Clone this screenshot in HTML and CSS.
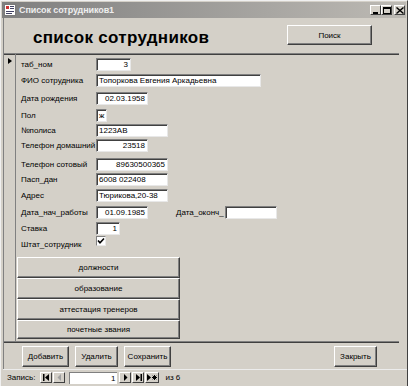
FILE: index.html
```html
<!DOCTYPE html>
<html lang="ru">
<head>
<meta charset="utf-8">
<title>Список сотрудников1</title>
<link rel="stylesheet" href="styles.css">
</head>
<body>
<div class="window">
  <div class="titlebar">
    <svg class="appicon" width="12" height="12" viewBox="0 0 12 12">
      <rect x="0.5" y="0.5" width="11" height="11" fill="#fff" stroke="#7a7a7a"/>
      <rect x="2" y="2" width="3" height="3" fill="#c33"/>
      <rect x="6" y="2" width="4" height="1" fill="#446"/>
      <rect x="6" y="4" width="4" height="1" fill="#446"/>
      <rect x="2" y="7" width="8" height="1" fill="#446"/>
      <rect x="2" y="9" width="6" height="1" fill="#446"/>
    </svg>
    <span class="title">Список сотрудников1</span>
    <div class="caption-btns">
      <span class="cbtn"><svg width="8" height="7" viewBox="0 0 8 7"><rect x="1" y="5" width="5" height="2" fill="#000"/></svg></span>
      <span class="cbtn"><svg width="8" height="7" viewBox="0 0 8 7"><rect x="0.5" y="0.5" width="7" height="6" fill="none" stroke="#000"/><rect x="0" y="0" width="8" height="2" fill="#000"/></svg></span>
      <span class="cbtn cbtn-close"><svg width="8" height="7" viewBox="0 0 8 7"><path d="M0.5 0.5 L7.5 6.5 M7.5 0.5 L0.5 6.5" stroke="#000" stroke-width="1.4"/></svg></span>
    </div>
  </div>

  <div class="form">
    <div class="header">
      <h1 class="heading">список сотрудников</h1>
      <button class="btn btn-search">Поиск</button>
    </div>

    <div class="detail">
      <div class="selector"><span class="arrow"></span></div>
      <div class="detail-body">
        <div class="fields">
          <label>таб_ном</label><div class="row"><span class="box w35 r">3</span></div>
          <label>ФИО сотрудника</label><div class="row"><span class="box w165">Топоркова Евгения Аркадьевна</span></div>
          <label>Дата рождения</label><div class="row"><span class="box w51 r">02.03.1958</span></div>
          <label>Пол</label><div class="row"><span class="box w11">ж</span></div>
          <label>№полиса</label><div class="row"><span class="box w72">1223АВ</span></div>
          <label>Телефон домашний</label><div class="row"><span class="box w51 r">23518</span></div>
          <label>Телефон сотовый</label><div class="row"><span class="box w72 r">89630500365</span></div>
          <label>Пасп_дан</label><div class="row"><span class="box w72">6008 022408</span></div>
          <label>Адрес</label><div class="row"><span class="box w72">Тюрикова,20-38</span></div>
          <label>Дата_нач_работы</label><div class="row"><span class="box w51 r">01.09.1985</span><span class="sublabel">Дата_оконч_</span><span class="box w51"></span></div>
          <label>Ставка</label><div class="row"><span class="box w23 r">1</span></div>
          <label>Штат_сотрудник</label><div class="row"><span class="check"><svg width="8" height="8" viewBox="0 0 8 8"><path d="M1 3.5 L3 5.8 L7 1.5" fill="none" stroke="#000" stroke-width="1.6"/></svg></span></div>
        </div>
        <div class="tabs">
          <button class="btn tab t1">должности</button>
          <button class="btn tab t2">образование</button>
          <button class="btn tab t2">аттестация тренеров</button>
          <button class="btn tab t3">почетные звания</button>
        </div>
      </div>
    </div>

    <div class="footer">
      <button class="btn fbtn w47">Добавить</button>
      <button class="btn fbtn w42">Удалить</button>
      <button class="btn fbtn w47">Сохранить</button>
      <span class="spacer"></span>
      <button class="btn fbtn w43">Закрыть</button>
    </div>
  </div>

  <div class="navbar">
    <span class="navlabel">Запись:</span>
    <span class="nbtn"><svg width="7" height="7" viewBox="0 0 7 7"><rect x="0" y="0" width="1.5" height="7"/><path d="M6 0 L2 3.5 L6 7Z"/></svg></span>
    <span class="nbtn dis"><svg width="7" height="7" viewBox="0 0 7 7"><path d="M5 0 L1.5 3.5 L5 7Z" fill="#a0a0a0"/></svg></span>
    <span class="navbox">1</span>
    <span class="nbtn"><svg width="7" height="7" viewBox="0 0 7 7"><path d="M2 0 L5.5 3.5 L2 7Z"/></svg></span>
    <span class="nbtn"><svg width="7" height="7" viewBox="0 0 7 7"><path d="M1 0 L5 3.5 L1 7Z"/><rect x="5.5" y="0" width="1.5" height="7"/></svg></span>
    <span class="nbtn wide"><svg width="10" height="7" viewBox="0 0 10 7"><path d="M0 0 L4 3.5 L0 7Z"/><path d="M5 3.5 H10 M7.5 1 V6 M5.7 1.7 L9.3 5.3 M9.3 1.7 L5.7 5.3" stroke="#000" stroke-width="1"/></svg></span>
    <span class="navof">из 6</span>
  </div>
</div>
</body>
</html>
```

FILE: styles.css
```css
* { box-sizing: border-box; }
html, body { margin: 0; padding: 0; }
body {
  width: 408px;
  height: 386px;
  overflow: hidden;
  background: #d4d0c8;
  font-family: "Liberation Sans", Arial, sans-serif;
  font-size: 8px;
  color: #000;
}
.window {
  width: 408px;
  height: 386px;
  background: #d4d0c8;
  border-top: 1px solid #f0f0f0;
  border-left: 1px solid #f0f0f0;
  border-right: 1px solid #404040;
  display: flex;
  flex-direction: column;
}
.titlebar {
  height: 16px;
  margin: 1px 1px 0 1px;
  background: linear-gradient(to right, #7f7f7f, #bdbab4);
  display: flex;
  align-items: center;
  padding-left: 2px;
}
.appicon { flex: none; }
.title {
  color: #eeeeee;
  font-size: 9px;
  font-weight: bold;
  margin-left: 3px;
  letter-spacing: -0.1px;
}
.caption-btns {
  margin-left: auto;
  display: flex;
  gap: 0;
  padding-right: 1px;
}
.cbtn {
  width: 11px;
  height: 10px;
  background: #d4d0c8;
  border-top: 1px solid #fff;
  border-left: 1px solid #fff;
  border-right: 1px solid #404040;
  border-bottom: 1px solid #404040;
  display: flex;
  align-items: center;
  justify-content: center;
}
.cbtn-close { margin-left: 2px; }

.form {
  width: 396px;
  margin-left: 2px;
  border-left: 1px solid #808080;
  display: flex;
  flex-direction: column;
}
.header {
  height: 35px;
  display: flex;
  align-items: flex-start;
  padding-left: 29px;
}
.heading {
  margin: 10px 0 0 0;
  font-size: 17px;
  font-weight: bold;
  line-height: 20px;
  letter-spacing: 0.3px;
}
.btn {
  font-family: "Liberation Sans", Arial, sans-serif;
  font-size: 8px;
  color: #000;
  background: #d4d0c8;
  border-top: 1px solid #ffffff;
  border-left: 1px solid #ffffff;
  border-right: 1px solid #404040;
  border-bottom: 1px solid #404040;
  box-shadow: inset -1px -1px 0 #808080;
  padding: 0;
  margin: 0;
}
.btn-search {
  margin-left: auto;
  margin-right: 27px;
  margin-top: 7px;
  width: 85px;
  height: 20px;
}

.detail {
  height: 288px;
  border-top: 1px solid #808080;
  box-shadow: inset 0 1px 0 #404040;
  display: flex;
}
.selector {
  width: 12px;
  flex: none;
  border-right: 1px solid #808080;
  padding-top: 4px;
  padding-left: 4px;
}
.arrow {
  display: block;
  width: 0;
  height: 0;
  border-top: 3.5px solid transparent;
  border-bottom: 3.5px solid transparent;
  border-left: 4px solid #000;
}
.detail-body {
  flex: 1;
  display: flex;
  flex-direction: column;
}
.fields {
  display: grid;
  grid-template-columns: 75px 1fr;
  grid-template-rows: 16px 18px 17px 15px 15px 19px 15px 16px 17px 16px 16px 12px;
  padding-top: 4px;
  padding-left: 5px;
}
.fields label {
  display: flex;
  align-items: center;
  height: 13px;
  white-space: nowrap;
}
.row {
  display: flex;
  align-items: flex-start;
}
.box {
  display: block;
  height: 13px;
  line-height: 11px;
  background: #fff;
  border-top: 1px solid #808080;
  border-left: 1px solid #808080;
  border-right: 1px solid #e8e8e8;
  border-bottom: 1px solid #e8e8e8;
  box-shadow: inset 1px 1px 0 #404040;
  padding: 0 2px 0 2px;
  white-space: nowrap;
  overflow: hidden;
}
.box.r { text-align: right; }
.w11 { width: 11px; padding: 0 1px 0 2px; }
.w23 { width: 24px; }
.w35 { width: 35px; }
.w51 { width: 52px; }
.w72 { width: 72px; }
.w165 { width: 165px; }
.sublabel {
  margin-left: 28px;
  width: 49px;
  line-height: 13px;
  white-space: nowrap;
}
.check {
  width: 10px;
  height: 10px;
  margin-top: -2px;
  background: #fff;
  border-top: 1px solid #808080;
  border-left: 1px solid #808080;
  border-right: 1px solid #e8e8e8;
  border-bottom: 1px solid #e8e8e8;
  display: flex;
  align-items: center;
  justify-content: center;
}
.tabs {
  margin-top: 7px;
  display: flex;
  flex-direction: column;
  padding-left: 1px;
}
.tab {
  width: 163px;
  height: 21px;
}
.tab.t2 { height: 21px; }
.tab.t3 { height: 19px; }

.footer {
  height: 28px;
  border-top: 1px solid #808080;
  box-shadow: inset 0 1px 0 #404040;
  display: flex;
  align-items: flex-start;
  padding-top: 4px;
  padding-left: 18px;
  padding-right: 22px;
  gap: 6px;
}
.fbtn { height: 21px; }
.w47 { width: 47px; }
.w42 { width: 43px; }
.w43 { width: 43px; }
.spacer { flex: 1; }

.navbar {
  flex: 1;
  border-top: 1px solid #ececec;
  margin-left: 2px;
  display: flex;
  align-items: center;
  padding-left: 4px;
  padding-bottom: 1px;
}
.navlabel { margin-right: 5px; }
.nbtn {
  width: 12px;
  height: 11px;
  background: #d4d0c8;
  border-top: 1px solid #fff;
  border-left: 1px solid #fff;
  border-right: 1px solid #404040;
  border-bottom: 1px solid #404040;
  display: flex;
  align-items: center;
  justify-content: center;
  margin-right: 1px;
}
.nbtn.wide { width: 14px; }
.navbox {
  width: 48px;
  height: 12px;
  margin: 0 2px 0 3px;
  background: #fff;
  border-top: 1px solid #808080;
  border-left: 1px solid #808080;
  text-align: right;
  padding-right: 2px;
  line-height: 11px;
}
.navof { margin-left: 5px; }
```
